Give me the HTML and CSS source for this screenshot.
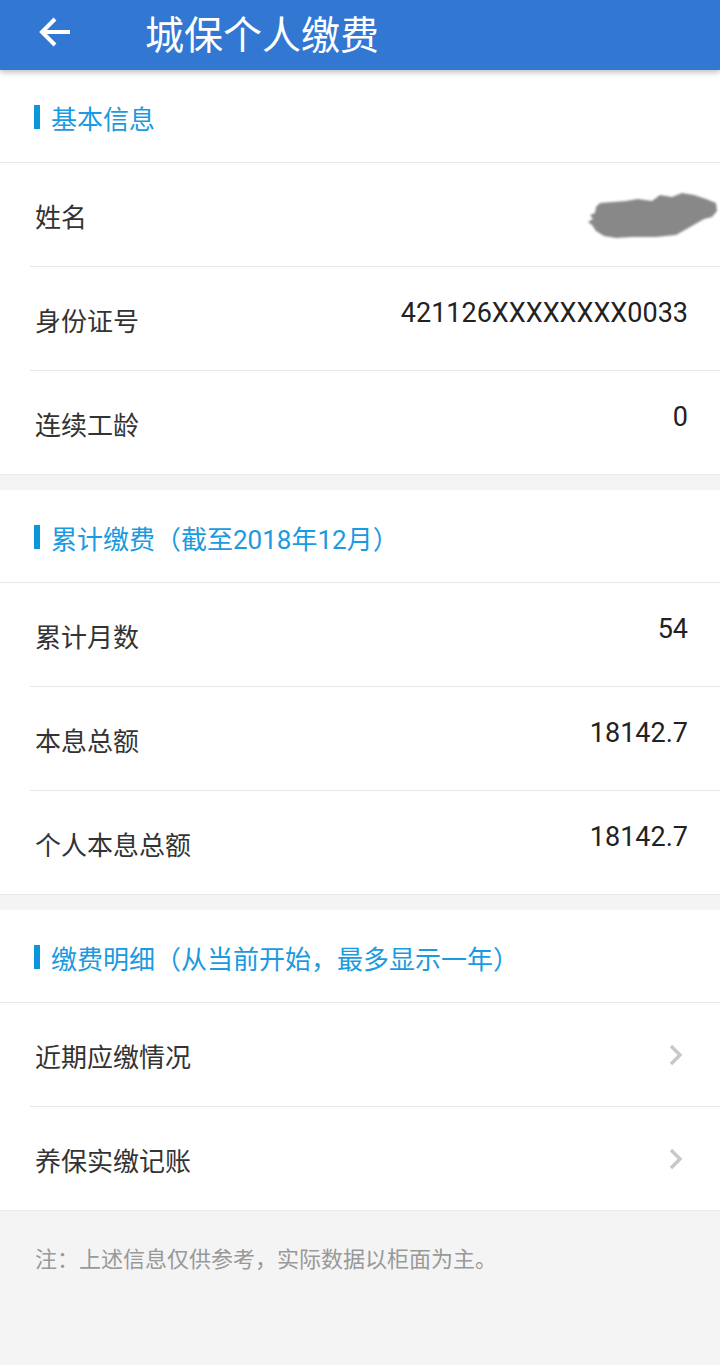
FILE: index.html
```html
<!DOCTYPE html>
<html lang="zh-CN">
<head>
<meta charset="utf-8">
<title>城保个人缴费</title>
<link rel="stylesheet" href="styles.css">
</head>
<body>
<header class="topbar">
  <span class="back">
    <svg width="34" height="32" viewBox="0 0 34 32"><path d="M32 16H4M17 3L4 16l13 13" fill="none" stroke="#fff" stroke-width="4" stroke-linecap="butt" stroke-linejoin="miter"/></svg>
  </span>
  <h1 class="title">城保个人缴费</h1>
</header>

<section class="card">
  <div class="card-head"><span class="bar"></span>基本信息</div>
  <div class="row"><span class="label">姓名</span>
    <span class="value blur">
      <svg width="134" height="52" viewBox="0 0 134 52">
        <defs><filter id="b" x="-10%" y="-20%" width="120%" height="140%"><feGaussianBlur stdDeviation="1.2"/></filter></defs>
        <path filter="url(#b)" fill="#888" d="M6 36 L2 33 L7 30 L4 26 L9 24 L10 18 L14 14 L40 12 L52 10 L66 12 L74 6 L86 8 L96 4 L108 6 L120 10 L130 14 L131 22 L126 28 L118 30 L104 38 L90 46 L70 48 L46 48 L30 49 L18 47 L10 42 Z"/>
      </svg>
    </span></div>
  <div class="row"><span class="label">身份证号</span><span class="value">421126XXXXXXXX0033</span></div>
  <div class="row"><span class="label">连续工龄</span><span class="value">0</span></div>
</section>

<section class="card">
  <div class="card-head"><span class="bar"></span>累计缴费（截至2018年12月）</div>
  <div class="row"><span class="label">累计月数</span><span class="value">54</span></div>
  <div class="row"><span class="label">本息总额</span><span class="value">18142.7</span></div>
  <div class="row"><span class="label">个人本息总额</span><span class="value">18142.7</span></div>
</section>

<section class="card">
  <div class="card-head"><span class="bar"></span>缴费明细（从当前开始，最多显示一年）</div>
  <div class="row link"><span class="label">近期应缴情况</span>
    <svg class="chev" width="16" height="22" viewBox="0 0 16 22"><path d="M3 2l9 9-9 9" fill="none" stroke="#c8c8c8" stroke-width="3.4"/></svg></div>
  <div class="row link"><span class="label">养保实缴记账</span>
    <svg class="chev" width="16" height="22" viewBox="0 0 16 22"><path d="M3 2l9 9-9 9" fill="none" stroke="#c8c8c8" stroke-width="3.4"/></svg></div>
</section>

<p class="note">注：上述信息仅供参考，实际数据以柜面为主。</p>
</body>
</html>
```

FILE: styles.css
```css
* { box-sizing: border-box; }
html, body {
  margin: 0;
  padding: 0;
}
body {
  background: #f4f4f4;
  font-family: Roboto, "Noto Sans CJK SC", sans-serif;
  color: #333;
  min-height: 1365px;
}
.topbar {
  position: relative;
  z-index: 2;
  height: 70px;
  background: #3277d2;
  display: flex;
  align-items: center;
  box-shadow: 0 2px 6px rgba(0,0,0,0.28);
}
.back {
  width: 145px;
  display: flex;
  padding-left: 38px;
  padding-bottom: 6px;
}
.title {
  margin: 0;
  color: #fff;
  font-weight: normal;
  font-size: 39px;
  line-height: 1;
  padding-bottom: 6px;
  font-family: "Noto Sans CJK SC", sans-serif;
}
.card {
  background: #fff;
  border-bottom: 1px solid #e8e8e8;
  margin-bottom: 15px;
}
.card-head {
  height: 93px;
  border-bottom: 1px solid #e8e8e8;
  display: flex;
  align-items: center;
  padding-left: 34px;
  padding-top: 2px;
  color: #1a9ae0;
  font-size: 26px;
  font-family: Roboto, "Noto Sans CJK SC", sans-serif;
}
.bar {
  width: 6px;
  height: 24px;
  background: #0b96dc;
  margin-right: 11px;
}
.row {
  height: 104px;
  margin-left: 30px;
  padding-left: 5px;
  padding-right: 32px;
  border-bottom: 1px solid #e8e8e8;
  display: flex;
  align-items: center;
  justify-content: space-between;
}
.row:last-child {
  border-bottom: none;
  height: 103px;
}
.label {
  font-size: 26px;
  font-family: "Noto Sans CJK SC", sans-serif;
  color: #333;
  padding-top: 2px;
}
.value {
  font-size: 27px;
  font-family: Roboto, sans-serif;
  color: #222;
  margin-bottom: 12px;
}
.value.blur {
  margin-right: -32px;
  margin-bottom: 0;
  display: flex;
  padding-top: 0;
}
.chev {
  margin-right: 4px;
}
.note {
  margin: 0;
  padding: 15px 0 0 35px;
  font-size: 22px;
  color: #999;
  font-family: "Noto Sans CJK SC", sans-serif;
}
```
